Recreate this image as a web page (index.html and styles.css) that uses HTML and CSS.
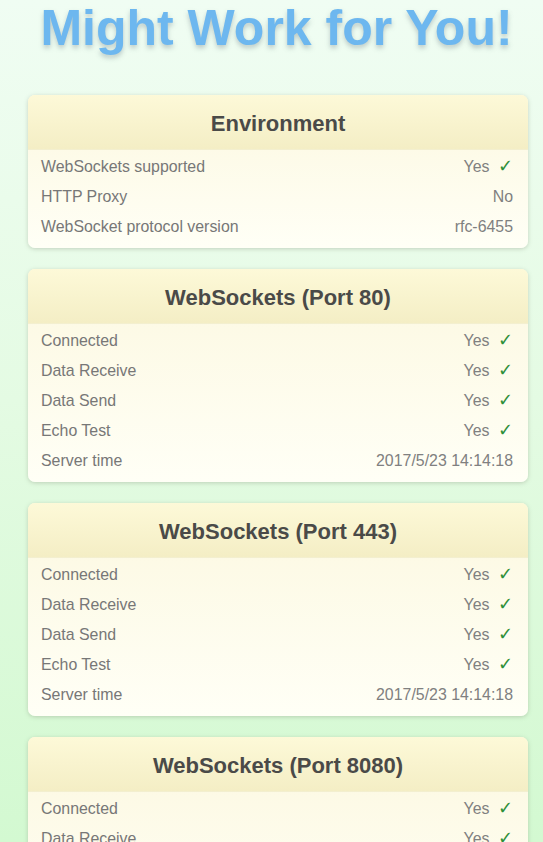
FILE: index.html
```html
<!DOCTYPE html>
<html>
<head>
<meta charset="utf-8">
<link rel="stylesheet" href="styles.css">
</head>
<body>
<h1 class="title">Might Work for You!</h1>
<div class="cards">
  <section class="card">
    <h2 class="card-head">Environment</h2>
    <div class="row"><span>WebSockets supported</span><span class="val">Yes <span class="ok">✓</span></span></div>
    <div class="row"><span>HTTP Proxy</span><span class="val">No</span></div>
    <div class="row"><span>WebSocket protocol version</span><span class="val">rfc-6455</span></div>
  </section>
  <section class="card">
    <h2 class="card-head">WebSockets (Port 80)</h2>
    <div class="row"><span>Connected</span><span class="val">Yes <span class="ok">✓</span></span></div>
    <div class="row"><span>Data Receive</span><span class="val">Yes <span class="ok">✓</span></span></div>
    <div class="row"><span>Data Send</span><span class="val">Yes <span class="ok">✓</span></span></div>
    <div class="row"><span>Echo Test</span><span class="val">Yes <span class="ok">✓</span></span></div>
    <div class="row"><span>Server time</span><span class="val">2017/5/23 14:14:18</span></div>
  </section>
  <section class="card">
    <h2 class="card-head">WebSockets (Port 443)</h2>
    <div class="row"><span>Connected</span><span class="val">Yes <span class="ok">✓</span></span></div>
    <div class="row"><span>Data Receive</span><span class="val">Yes <span class="ok">✓</span></span></div>
    <div class="row"><span>Data Send</span><span class="val">Yes <span class="ok">✓</span></span></div>
    <div class="row"><span>Echo Test</span><span class="val">Yes <span class="ok">✓</span></span></div>
    <div class="row"><span>Server time</span><span class="val">2017/5/23 14:14:18</span></div>
  </section>
  <section class="card">
    <h2 class="card-head">WebSockets (Port 8080)</h2>
    <div class="row"><span>Connected</span><span class="val">Yes <span class="ok">✓</span></span></div>
    <div class="row"><span>Data Receive</span><span class="val">Yes <span class="ok">✓</span></span></div>
    <div class="row"><span>Data Send</span><span class="val">Yes <span class="ok">✓</span></span></div>
    <div class="row"><span>Echo Test</span><span class="val">Yes <span class="ok">✓</span></span></div>
    <div class="row"><span>Server time</span><span class="val">2017/5/23 14:14:18</span></div>
  </section>
</div>
</body>
</html>
```
FILE: styles.css
```css
html, body {
  margin: 0;
  padding: 0;
}
body {
  font-family: "Liberation Sans", Arial, sans-serif;
  background: linear-gradient(180deg, #f0fdf3 0px, #e4fbe3 400px, #d3f9d1 842px);
  background-attachment: fixed;
  min-height: 842px;
  overflow: hidden;
}
.title {
  margin: 0;
  height: 95px;
  box-sizing: border-box;
  padding-top: 1px;
  padding-left: 10px;
  text-align: center;
  font-size: 50px;
  line-height: 54px;
  font-weight: bold;
  color: #6db7ef;
  text-shadow: 0 3px 5px rgba(90, 110, 120, 0.35);
}
.cards {
  display: flex;
  flex-direction: column;
  gap: 21px;
  padding: 0 15px 0 28px;
}
.card {
  width: 500px;
  border-radius: 7px;
  background: linear-gradient(180deg, #fcf8e0 0%, #fffff6 100%);
  box-shadow: 0 1px 4px rgba(120, 130, 110, 0.35);
  padding-bottom: 8px;
  overflow: hidden;
}
.card-head {
  margin: 0;
  height: 54px;
  line-height: 57px;
  text-align: center;
  font-size: 22px;
  font-weight: bold;
  color: #4a4a48;
  background: linear-gradient(180deg, #fdf9d8 0%, #f4eec5 100%);
  border-bottom: 1px solid #f3efcf;
}
.row {
  display: flex;
  justify-content: space-between;
  align-items: center;
  box-sizing: border-box;
  height: 30px;
  line-height: 26px;
  padding: 4px 15px 0 13px;
  font-size: 15.9px;
  color: #777;
}
.val {
  color: #808080;
}
.ok {
  color: #2e8f38;
  font-family: "DejaVu Sans", sans-serif;
  font-weight: bold;
  font-size: 18px;
  line-height: 0;
  margin-left: 4px;
}
```
